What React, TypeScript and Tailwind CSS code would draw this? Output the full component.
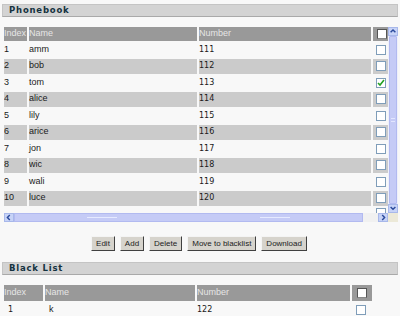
const phonebook = [
  { idx: 1, name: 'amm', num: '111' },
  { idx: 2, name: 'bob', num: '112' },
  { idx: 3, name: 'tom', num: '113', checked: true },
  { idx: 4, name: 'alice', num: '114' },
  { idx: 5, name: 'lily', num: '115' },
  { idx: 6, name: 'arice', num: '116' },
  { idx: 7, name: 'jon', num: '117' },
  { idx: 8, name: 'wic', num: '118' },
  { idx: 9, name: 'wali', num: '119' },
  { idx: 10, name: 'luce', num: '120' },
]

function Box({ checked, head }: { checked?: boolean; head?: boolean }) {
  return (
    <span
      className={`block w-[10px] h-[10px] border ${head ? 'bg-white border-[#555] border-b-[#888]' : 'bg-white border-[#7f9db9]'} flex items-center justify-center`}
    >
      {checked && (
        <svg width="8" height="8" viewBox="0 0 8 8" fill="none" stroke="#21a121" strokeWidth="1.6">
          <path d="M1 4l2 2 4-5" />
        </svg>
      )}
    </span>
  )
}

function SectionBar({ title }: { title: string }) {
  return (
    <div className="mx-[2px] h-[13px] bg-[#d3d3d3] border border-[#c4c4c4] border-b-[#a9a9a9] pl-[6px] flex items-center">
      <span className="font-['DejaVu_Sans'] font-bold text-[8.5px] tracking-[0.8px] text-[#15323f]">{title}</span>
    </div>
  )
}

function Arrow({ dir }: { dir: 'up' | 'down' | 'left' | 'right' }) {
  const d = {
    up: 'M2 6l3-3 3 3',
    down: 'M2 3l3 3 3-3',
    left: 'M6 2l-3 3 3 3',
    right: 'M4 2l3 3-3 3',
  }[dir]
  return (
    <div className="w-[10px] h-[9px] bg-[#c7d3f7] border border-[#a8b8ea] flex items-center justify-center">
      <svg width="9" height="9" viewBox="0 0 10 10" fill="none" stroke="#2a4a9c" strokeWidth="1.8">
        <path d={d} />
      </svg>
    </div>
  )
}

function Btn({ label }: { label: string }) {
  return (
    <button className="h-[15px] px-[4px] bg-[#d6d3cc] border border-t-[#f4f4f4] border-l-[#f4f4f4] border-r-[#404040] border-b-[#404040] text-[8px] leading-none text-[#222] font-['Liberation_Sans']">
      {label}
    </button>
  )
}

export default function App() {
  return (
    <div className="w-[400px] h-[316px] bg-[#f8f8f8] overflow-hidden font-['Liberation_Sans',sans-serif] text-[9px] text-[#1a1a1a]">
      <div className="pt-[4px]">
        <SectionBar title="Phonebook" />
      </div>

      {/* phonebook table with scrollbars */}
      <div className="mt-[10px] ml-[4px] flex">
        <div className="w-[384px] h-[186px] overflow-hidden flex flex-col gap-[1.5px]">
          <div className="grid grid-cols-[23px_168px_172px_16px] gap-x-[2px] h-[16px] text-[#e6e6e6]">
            <div className="bg-[#999] flex items-center">Index</div>
            <div className="bg-[#999] flex items-center">Name</div>
            <div className="bg-[#999] flex items-center">Number</div>
            <div className="bg-[#999] flex items-center pl-[4px]"><Box head /></div>
          </div>
          {phonebook.map((r) => {
            const bg = r.idx % 2 === 0 ? 'bg-[#cbcbcb]' : ''
            return (
              <div key={r.idx} className="grid grid-cols-[23px_168px_172px_16px] gap-x-[2px] h-[15px] shrink-0">
                <div className={`${bg} flex items-center`}>{r.idx}</div>
                <div className={`${bg} flex items-center`}>{r.name}</div>
                <div className={`${bg} flex items-center font-['DejaVu_Sans'] text-[8px]`}>{r.num}</div>
                <div className={`${bg} flex items-center pl-[3px]`}><Box checked={r.checked} /></div>
              </div>
            )
          })}
          {/* next row, mostly scrolled out of view */}
          <div className="grid grid-cols-[23px_168px_172px_16px] gap-x-[2px] h-[15px] shrink-0 pt-[1px]">
            <div />
            <div />
            <div />
            <div className="pl-[3px]"><Box /></div>
          </div>
        </div>
        {/* vertical scrollbar */}
        <div className="w-[10px] h-[186px] flex flex-col bg-[#eef0fb]">
          <Arrow dir="up" />
          <div className="flex-1 mx-[1px] bg-[#c5cbf6] border border-[#b2baf0] rounded-[1px] flex items-center justify-center">
            <div className="w-[4px] h-[4px] border-t border-b border-[#e2e6ff]" />
          </div>
          <Arrow dir="down" />
        </div>
      </div>
      {/* horizontal scrollbar */}
      <div className="ml-[4px] flex h-[9px]">
        <Arrow dir="left" />
        <div className="w-[349px] bg-[#c5cbf6] border border-[#b2baf0] flex items-center justify-around">
          <div className="w-[30px] h-[1px] bg-[#e6eaff]" />
          <div className="w-[30px] h-[1px] bg-[#e6eaff]" />
        </div>
        <div className="w-[15px] bg-[#f1f1f1]" />
        <Arrow dir="right" />
        <div className="w-[10px] bg-[#ece9d8]" />
      </div>

      {/* buttons */}
      <div className="mt-[14px] flex justify-center gap-[5px] pr-[2px]">
        <Btn label="Edit" />
        <Btn label="Add" />
        <Btn label="Delete" />
        <Btn label="Move to blacklist" />
        <Btn label="Download" />
      </div>

      <div className="mt-[11px]">
        <SectionBar title="Black List" />
      </div>

      <div className="mt-[10px] ml-[4px] flex flex-col gap-[1px]">
        <div className="grid grid-cols-[39px_150px_153px_20px] gap-x-[2px] h-[16px] text-[#e6e6e6]">
          <div className="bg-[#999] flex items-center">Index</div>
          <div className="bg-[#999] flex items-center">Name</div>
          <div className="bg-[#999] flex items-center">Number</div>
          <div className="bg-[#999] flex items-center pl-[5px]"><Box head /></div>
        </div>
        <div className="grid grid-cols-[39px_150px_153px_20px] gap-x-[2px] h-[15px]">
          <div className="flex items-center pl-[4px] font-['DejaVu_Sans'] text-[8px]">1</div>
          <div className="flex items-center pl-[4px]">k</div>
          <div className="flex items-center font-['DejaVu_Sans'] text-[8px]">122</div>
          <div className="flex items-center pl-[4px]"><Box /></div>
        </div>
      </div>
    </div>
  )
}
